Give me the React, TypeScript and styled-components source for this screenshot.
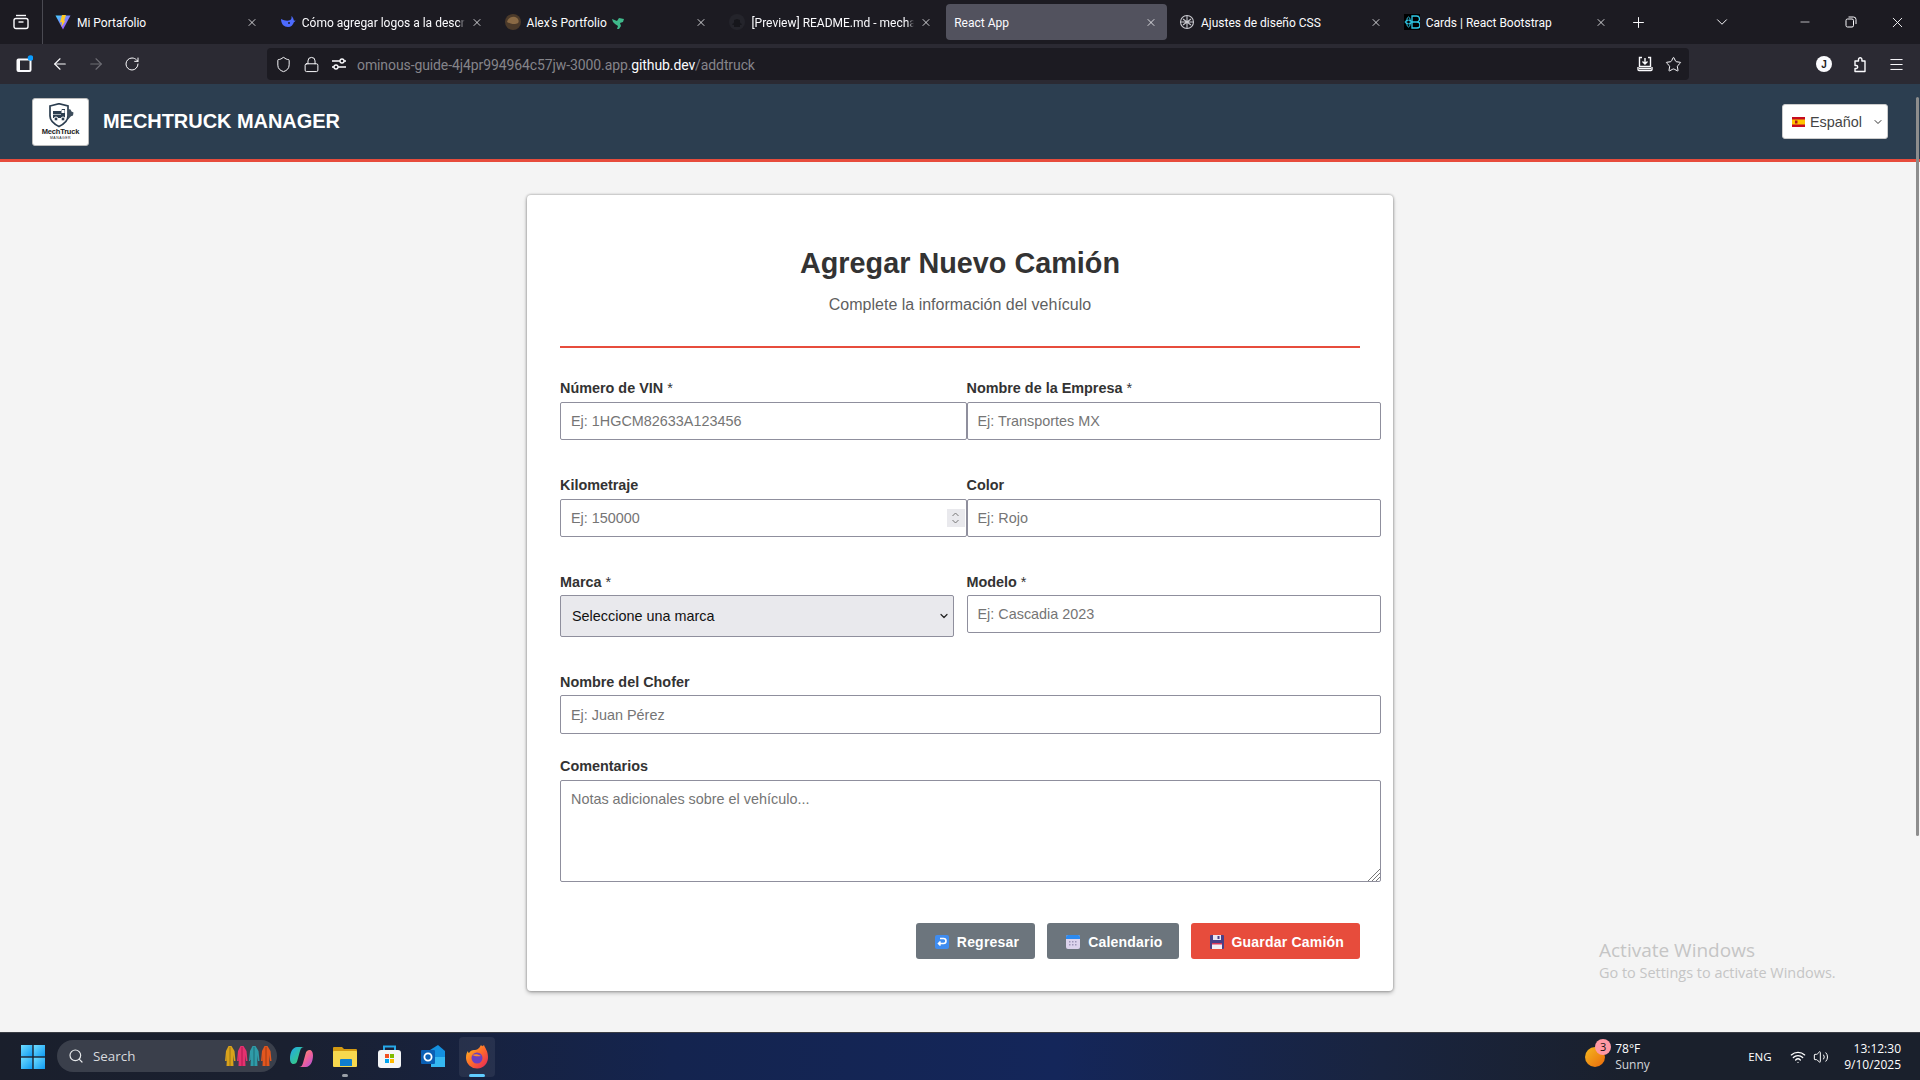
import React from "react";
import styled, { createGlobalStyle } from "styled-components";
import { ArrowLeft, ArrowRight, ChevronDown, Lock, Menu, Minus, Plus, RotateCw, Search, Shield, Star, Volume2, Wifi, X } from "lucide-react";

const Global = createGlobalStyle`
  html, body { margin: 0; padding: 0; width: 1920px; height: 1080px; overflow: hidden; background: #f4f4f4; }
  * { box-sizing: border-box; }
`;

const Screen = styled.div`
  width: 1920px; height: 1080px; display: flex; flex-direction: column; overflow: hidden;
  font-family: "Liberation Sans", Arial, sans-serif;
`;

/* ---------- browser chrome ---------- */
const TabStrip = styled.div`
  height: 44px; flex: none; display: flex; align-items: center; background: #1c1b22; color: #fbfbfe;
  font-family: Roboto, "Noto Sans", sans-serif; font-size: 12px;
`;
const SideSlot = styled.div`
  width: 43px; height: 44px; flex: none; display: flex; align-items: center; justify-content: center;
  border-right: 1px solid #4a4a52; margin-right: 2px;
`;
const Tab = styled.div`
  flex: 0 0 224.8px; min-width: 0; height: 44px; padding: 4px 2px;
`;
const TabBody = styled.div<{ $active?: boolean }>`
  height: 36px; padding: 0 10px 0 8px; display: flex; align-items: center; gap: 6px; border-radius: 4px; min-width: 0;
  background: ${(p) => (p.$active ? "#52525e" : "transparent")};
`;
const Fav = styled.span`
  width: 16px; height: 16px; flex: none; display: flex;
`;
const TabTitle = styled.span<{ $fade?: boolean }>`
  flex: 1; min-width: 0; white-space: nowrap; display: flex; align-items: center; gap: 4px; padding-top: 1px;
  ${(p) => (p.$fade ? "-webkit-mask-image: linear-gradient(to left, transparent 0, #000 7px); mask-image: linear-gradient(to left, transparent 0, #000 7px);" : "")}
`;
const TabClose = styled.span`
  width: 12px; height: 16px; flex: none; display: flex; align-items: center; justify-content: center;
`;
const StripBtn = styled.div<{ $w?: number; $ml?: string; $mr?: number }>`
  width: ${(p) => p.$w ?? 36}px; height: 44px; flex: none; display: flex; align-items: center; justify-content: center;
  margin-left: ${(p) => p.$ml ?? "0"}; margin-right: ${(p) => p.$mr ?? 0}px;
`;

const Toolbar = styled.div`
  height: 40px; flex: none; display: flex; align-items: center; padding: 0 6px; background: #2b2a33; color: #fbfbfe;
`;
const ToolBtn = styled.div<{ $dim?: boolean }>`
  width: 36px; height: 32px; flex: none; display: flex; align-items: center; justify-content: center;
  color: ${(p) => (p.$dim ? "#6f6e75" : "#fbfbfe")};
`;
const UrlBar = styled.div`
  width: 1422px; height: 32px; margin-left: 117px; padding: 0 2px; flex: none; display: flex; align-items: center;
  background: #1c1b22; border-radius: 4px;
`;
const UrlIcon = styled.div`
  width: 28px; height: 32px; flex: none; display: flex; align-items: center; justify-content: center;
`;
const UrlText = styled.div`
  flex: 1; margin-left: 4px; padding-top: 1px; font-family: Roboto, "Noto Sans", sans-serif; font-size: 14px; letter-spacing: -0.1px;
  color: #85848a; white-space: nowrap;
  b { font-weight: 400; color: #fbfbfe; }
`;
const ToolRight = styled.div`
  margin-left: auto; display: flex;
`;
const Avatar = styled.div`
  width: 16px; height: 16px; border-radius: 50%; background: #fbfbfe; color: #1c1b22; font-size: 10px; font-weight: 700;
  display: flex; align-items: center; justify-content: center;
`;

/* ---------- app ---------- */
const Page = styled.div`
  position: relative; flex: 1; min-height: 0; display: flex; flex-direction: column; background: #f4f4f4;
`;
const NavBar = styled.header`
  height: 78px; flex: none; display: flex; align-items: center; padding: 0 32px; background: #2c3e50; border-bottom: 3px solid #e74c3c;
`;
const LogoBox = styled.div`
  width: 57px; height: 48px; flex: none; background: #fff; border: 1px solid #bbb; border-radius: 3px;
  display: flex; flex-direction: column; align-items: center; padding-top: 4px; color: #222;
`;
const LogoName = styled.span`
  font-size: 7.5px; font-weight: 700; line-height: 8px; letter-spacing: -0.2px; white-space: nowrap;
`;
const LogoSub = styled.span`
  font-size: 3.5px; line-height: 4px; letter-spacing: 0.5px;
`;
const Brand = styled.h1`
  margin: 0 0 2px 14px; font-size: 20px; line-height: 24px; font-weight: 700; color: #fff; letter-spacing: -0.05px;
`;
const LangSelect = styled.div`
  margin-left: auto; width: 106px; height: 35px; padding: 0 3px 0 9px; display: flex; align-items: center; gap: 5px;
  background: #fff; border: 1px solid #ccc; border-radius: 3px; font-size: 14.4px; color: #444;
`;
const LangLabel = styled.span`
  flex: 1;
`;
const Main = styled.main`
  flex: 1; min-height: 0; padding-top: 33px; display: flex; justify-content: center;
`;
const Card = styled.section`
  width: 866px; height: fit-content; padding: 52px 33px 32px; background: #fff; border-radius: 4px;
  box-shadow: 0 0 2px 1px rgba(0, 0, 0, 0.18), 0 2px 4px rgba(0, 0, 0, 0.25);
`;
const Title = styled.h2`
  margin: 0 0 16px; text-align: center; font-size: 28.8px; line-height: 33px; font-weight: 700; color: #333;
`;
const Subtitle = styled.p`
  margin: 0; text-align: center; font-size: 16px; line-height: 18px; color: #5f5f5f;
`;
const Divider = styled.hr`
  margin: 32px 0 32px; width: 800px; height: 2px; border: 0; background: #e74c3c;
`;
const Row = styled.div<{ $mb: number; $cols?: string }>`
  display: grid; grid-template-columns: ${(p) => p.$cols ?? "406.5px 414.5px"}; margin-bottom: ${(p) => p.$mb}px; width: 821px;
`;
const Field = styled.div`
  position: relative; display: flex; flex-direction: column; min-width: 0;
`;
const Label = styled.label<{ $mb?: number }>`
  height: 16px; line-height: 16px; margin-bottom: ${(p) => p.$mb ?? 6}px; font-size: 14.4px; font-weight: 700; color: #333; white-space: nowrap;
  span { font-weight: 400; }
`;
const Input = styled.input<{ $h?: number }>`
  width: 100%; height: ${(p) => p.$h ?? 38}px; padding: 0 10px; border: 1px solid #8f8f9d; border-radius: 2px; background: #fff;
  font-family: inherit; font-size: 14.4px; color: #222; outline: none;
  &::placeholder { color: #757575; opacity: 1; }
`;
const Spinner = styled.span`
  position: absolute; right: 2px; bottom: 10px; width: 18px; height: 18px; background: #e9e9ed; color: #777;
  display: flex; flex-direction: column; align-items: center; justify-content: center;
`;
const SelectBox = styled.select`
  appearance: none; width: 394px; height: 42px; padding: 0 11px; border: 1px solid #8f8f9d; border-radius: 2px; background: #e9e9ed;
  font-family: inherit; font-size: 14.4px; color: #111; outline: none;
`;
const SelectArrow = styled.span`
  position: absolute; left: 378px; top: 36px; color: #222; display: flex; pointer-events: none;
`;
const TextArea = styled.textarea`
  display: block; width: 100%; height: 102px; padding: 10px; border: 1px solid #8f8f9d; border-radius: 2px; resize: none;
  font-family: inherit; font-size: 14.4px; outline: none;
  &::placeholder { color: #757575; opacity: 1; }
`;
const Grip = styled.svg`
  position: absolute; right: 1px; bottom: 1px;
`;
const Actions = styled.div`
  margin-top: 41px; display: flex; justify-content: flex-end; gap: 12px;
`;
const Button = styled.button<{ $primary?: boolean }>`
  height: 36px; padding: 1px 16px 0 19px; border: 0; border-radius: 3px; display: flex; align-items: center; gap: 8px;
  background: ${(p) => (p.$primary ? "#e74c3c" : "#6c757d")}; color: #fff;
  font-family: inherit; font-size: 14px; font-weight: 700; letter-spacing: 0.2px;
`;
const Scroll = styled.div`
  position: absolute; top: 13px; right: 1px; width: 3px; height: 739px; border-radius: 2px; background: #8d8d8d;
`;
const Watermark = styled.div`
  position: absolute; left: 1599px; top: 854px; color: #c5c5c5; font-family: "Open Sans", "Noto Sans", sans-serif;
  div:first-child { font-size: 19px; line-height: 24px; }
  div:last-child { font-size: 14.45px; line-height: 22px; }
`;

/* ---------- taskbar ---------- */
const Taskbar = styled.footer`
  height: 48px; flex: none; display: flex; align-items: center; padding: 0 19px 0 12px; color: #fff;
  background: linear-gradient(90deg, #1a1f2c 0%, #1a2030 15%, #14244f 35%, #14265a 55%, #19243f 72%, #1a202c 85%);
  border-top: 1px solid #3a3d45; font-family: "Open Sans", "Noto Sans", sans-serif; font-size: 12px;
`;
const TaskBtn = styled.div<{ $w?: number; $active?: boolean }>`
  position: relative; width: ${(p) => p.$w ?? 44}px; height: 40px; flex: none; display: flex; align-items: center; justify-content: center;
  &::before {
    content: ""; position: absolute; inset: 0 4px; border-radius: 4px;
    background: ${(p) => (p.$active ? "rgba(255,255,255,.07)" : "transparent")};
  }
  svg { position: relative; }
`;
const Indicator = styled.span<{ $on?: boolean }>`
  position: absolute; bottom: 0; left: 50%; transform: translateX(-50%); height: 3px; border-radius: 2px;
  width: ${(p) => (p.$on ? 16 : 6)}px; background: ${(p) => (p.$on ? "#60cdff" : "#9aa0a8")};
`;
const SearchPill = styled.div`
  width: 220px; height: 32px; margin: -1px 2px 0 4px; padding: 0 5px 0 11px; display: flex; align-items: center; gap: 9px; flex: none;
  border-radius: 16px; background: #3a3f4b; color: #d8dade; font-size: 13.4px;
`;
const Coats = styled.svg`
  margin-left: auto;
`;
const TrayRight = styled.div`
  margin-left: auto; display: flex; align-items: center;
`;
const Weather = styled.div`
  position: relative; display: flex; align-items: center; gap: 10px; width: 163px;
`;
const Sun = styled.span`
  width: 20px; height: 20px; border-radius: 50%; background: linear-gradient(135deg, #f4b81f, #ea6a0c); flex: none;
`;
const Badge = styled.span`
  position: absolute; left: 10px; top: -2px; width: 16px; height: 16px; border-radius: 50%; background: #ff99a4; color: #111;
  font-size: 11px; display: flex; align-items: center; justify-content: center;
`;
const TwoLine = styled.div<{ $right?: boolean }>`
  display: flex; flex-direction: column; line-height: 16px; text-align: ${(p) => (p.$right ? "right" : "left")};
  margin-left: ${(p) => (p.$right ? "12px" : "0")};
  small { font-size: 12px; color: #d4d6da; }
`;
const Eng = styled.span`
  width: 38px; font-size: 11.5px; font-weight: 500;
`;
const TrayIcon = styled.span`
  width: 23px; display: flex; justify-content: center;
`;

/* ---------- drawings ---------- */
const Vite = () => (
  <svg width="16" height="16" viewBox="0 0 16 16">
    <defs><linearGradient id="vt" x1="0" y1="0" x2="1" y2="1"><stop offset="0" stopColor="#41d1ff" /><stop offset="1" stopColor="#bd34fe" /></linearGradient></defs>
    <path d="M0.5 1.5 L15.5 1.5 L8 15.5 Z" fill="url(#vt)" />
    <path d="M7 1 L11 1 L9 7 L10.5 6.5 L6.5 13 L7 8 L5 8.5 Z" fill="#ffca28" />
  </svg>
);
const Whale = () => (
  <svg width="16" height="16" viewBox="0 0 16 16"><path d="M1 5c0 5 3 8 7 8 3 0 5-2 6-5 .5 0 1-.5 1.500-1.500-.7.2-1.200.2-1.700 0-.3-2-1-3.500-2.500-4.500.5 1.500.3 3-1 4C8 7 5 7 1 5z" fill="#4d6bfe" /><circle cx="9" cy="9" r="1" fill="#1c1b22" /></svg>
);
const Portrait = () => (
  <svg width="16" height="16" viewBox="0 0 16 16"><circle cx="8" cy="8" r="8" fill="#4b3a2a" /><path d="M2 8c1-4 6-7 10-4 2 2 2 4 1 5-3 2-8 1-11-1z" fill="#8a6a45" /></svg>
);
const Dino = () => (
  <svg width="14" height="14" viewBox="0 0 14 14"><path d="M1 3l5 2 2-3 5 1-1 3-3 1 1 3-2 3H6l1-3-3-2-2-2z" fill="#3fb98b" /></svg>
);
const GitHubMark = () => (
  <svg width="16" height="16" viewBox="0 0 16 16"><circle cx="8" cy="8" r="8" fill="#24242b" /><path d="M5 13v-2c-2 0-2-1-2-1 1 0 2-1 2-2V6l3-1 3 1v2c0 1 1 2 2 2 0 0 0 1-2 1v2z" fill="#16161b" /></svg>
);
const Knot = () => (
  <svg width="16" height="16" viewBox="0 0 16 16" fill="none" stroke="#c9c9cf" strokeWidth="1.100"><circle cx="8" cy="8" r="6.500" /><path d="M4 5l8 6M12 5l-8 6M8 1.500v13M2 8h12" /></svg>
);
const RBLogo = () => (
  <svg width="16" height="16" viewBox="0 0 16 16"><rect width="16" height="16" fill="#000" /><g fill="none" stroke="#2fc9e8" strokeWidth="1"><ellipse cx="4.500" cy="8" rx="3.500" ry="1.800" /><ellipse cx="4.500" cy="8" rx="1.800" ry="5" /><path d="M8 2h4.500a2.800 2.800 0 0 1 0 6H8zM8 8h5a3 3 0 0 1 0 6H8z" strokeWidth="1.300" /></g></svg>
);
const TabsIcon = () => (
  <svg width="16" height="16" viewBox="0 0 16 16" fill="none" stroke="#fbfbfe" strokeWidth="1.400"><path d="M3 1.500h10" /><rect x="1" y="4.500" width="14" height="10" rx="2" /><path d="M5.500 8h5" /></svg>
);
const SidebarIcon = () => (
  <svg width="18" height="18" viewBox="0 0 18 18"><rect x="2.500" y="4.500" width="13" height="11.500" rx="1" fill="none" stroke="#fbfbfe" strokeWidth="2" /><rect x="2" y="4" width="3" height="12" fill="#fbfbfe" /><circle cx="15.500" cy="3" r="2.800" fill="#0a9dff" /></svg>
);
const Sliders = () => (
  <svg width="16" height="16" viewBox="0 0 16 16" fill="none" stroke="#fbfbfe" strokeWidth="1.300"><path d="M1 5h8M13 5h2M7 11h8M1 11h2" /><circle cx="11" cy="5" r="2" /><circle cx="5" cy="11" r="2" /></svg>
);
const SaveTab = () => (
  <svg width="16" height="16" viewBox="0 0 16 16" fill="none" stroke="#fbfbfe" strokeWidth="1.400"><path d="M5 1.500H2.500v9h11v-9H11M8 2v6M5.500 5.500 8 8l2.500-2.500" /><path d="M1 11v2.500a1 1 0 0 0 1 1h12a1 1 0 0 0 1-1V11" /><path d="M2 12.500h12" /></svg>
);
const Puzzle = () => (
  <svg width="16" height="17" viewBox="0 0 16 17" fill="none" stroke="#fbfbfe" strokeWidth="1.400" strokeLinejoin="round"><path d="M3 5h3.500V3.500a1.700 1.700 0 1 1 3.400 0V5H13v10.500H3v-3h1.200a1.500 1.500 0 0 0 0-3H3z" /></svg>
);
const Restore = () => (
  <svg width="12" height="12" viewBox="0 0 12 12" fill="none" stroke="#fbfbfe" strokeWidth="1"><rect x="1" y="3" width="7.500" height="8" rx="1.500" /><path d="M3.500 1h5a2.500 2.500 0 0 1 2.500 2.500V8" /></svg>
);
const TruckLogo = () => (
  <svg width="30" height="25" viewBox="0 0 30 25">
    <path d="M4 3 13 0.700 22 3v10c0 5-4 8-9 10.500C8 21 4 18 4 13z" fill="none" stroke="#2c3e50" strokeWidth="1.700" />
    <path d="M7 8h8l1-2h3v9H7z" fill="#2c3e50" />
    <rect x="15.500" y="7" width="3" height="3" fill="#fff" />
    <path d="M7 11.500h8" stroke="#fff" strokeWidth=".6" />
    <circle cx="10" cy="16" r="2" fill="#2c3e50" stroke="#fff" /><circle cx="17" cy="16" r="2" fill="#2c3e50" stroke="#fff" />
    <path d="M22 6l2.500.5 1 2 2 1-.5 3-2 .8-3 3.200z" fill="#3d4d5c" />
  </svg>
);
const Flag = () => (
  <svg width="13" height="10" viewBox="0 0 13 10"><rect width="13" height="10" fill="#c60b1e" /><rect y="2.500" width="13" height="5" fill="#ffc400" /><rect x="3" y="3.500" width="2.500" height="3" fill="#ad1519" /></svg>
);
const ReturnIcon = () => (
  <svg width="14" height="14" viewBox="0 0 14 14"><rect width="14" height="14" rx="2" fill="#3f8cf0" /><path d="M5 3.500h3.500a2.500 2.500 0 0 1 0 5H3.500M5.500 6.500l-2 2 2 2" fill="none" stroke="#fff" strokeWidth="1.600" /></svg>
);
const CalIcon = () => (
  <svg width="14" height="14" viewBox="0 0 14 14"><rect width="14" height="14" rx="2" fill="#dcd3ec" /><path d="M0 4V2a2 2 0 0 1 2-2h10a2 2 0 0 1 2 2v2z" fill="#2c8af0" /><g fill="#9d95b8"><rect x="3" y="6" width="1.500" height="1.500" /><rect x="6" y="6" width="1.500" height="1.500" /><rect x="9" y="6" width="1.500" height="1.500" /><rect x="3" y="9" width="1.500" height="1.500" /><rect x="6" y="9" width="1.500" height="1.500" /><rect x="9" y="9" width="1.500" height="1.500" /></g></svg>
);
const FloppyIcon = () => (
  <svg width="14" height="14" viewBox="0 0 14 14"><rect width="14" height="14" rx="1" fill="#4a3f86" /><rect x="3" y="0" width="8" height="5" fill="#e9e4f2" /><rect x="7.500" y="1" width="2" height="3" fill="#4a3f86" /><rect x="2" y="8" width="10" height="6" fill="#f2eef5" /><rect x="2" y="8" width="10" height="1.500" fill="#d9385c" /></svg>
);
const WinLogo = () => (
  <svg width="24" height="24" viewBox="0 0 24 24"><defs><linearGradient id="wg" x1="0" y1="0" x2="1" y2="1"><stop offset="0" stopColor="#6fdcff" /><stop offset="1" stopColor="#0f9bf2" /></linearGradient></defs><g fill="url(#wg)"><rect width="11.300" height="11.300" /><rect x="12.700" width="11.300" height="11.300" /><rect y="12.700" width="11.300" height="11.300" /><rect x="12.700" y="12.700" width="11.300" height="11.300" /></g></svg>
);
const CoatsArt = () => (
  <Coats width="47" height="22" viewBox="0 0 47 22">
    {[["#d9a21b", "#8c6a10", 0], ["#e5316f", "#a3124a", 12], ["#2f9ba8", "#175f6a", 24], ["#e2571f", "#98340c", 36]].map(([c, d, x]) => (
      <g key={String(x)} transform={`translate(${x})`}>
        <path d="M3.500 1h3l3 5 1 10-1.500 0L8 10l.5 11h-7L2 10l-.5 6L0 16l1-10z" fill={String(c)} />
        <path d="M5 2v19" stroke={String(d)} strokeWidth=".8" />
      </g>
    ))}
  </Coats>
);
const Copilot = () => (
  <svg width="23" height="22" viewBox="0 0 23 22">
    <defs>
      <linearGradient id="cpa" x1="0" y1="0" x2="1" y2="1"><stop offset="0" stopColor="#1fa6ee" /><stop offset=".7" stopColor="#36c98a" /><stop offset="1" stopColor="#c4d84a" /></linearGradient>
      <linearGradient id="cpb" x1="0" y1="0" x2="1" y2="1"><stop offset="0" stopColor="#f4a35a" /><stop offset=".55" stopColor="#f0609a" /><stop offset="1" stopColor="#a752e0" /></linearGradient>
    </defs>
    <path d="M7 1h7c-2 0-3 1-4 4l-2.500 9c-.7 3-2 4-4 4-2.500 0-3.500-2.500-3.500-5.500C0 6 3 1 7 1z" fill="url(#cpa)" />
    <path d="M16 21H9c2 0 3-1 4-4l2.500-9c.7-3 2-4 4-4 2.500 0 3.500 2.500 3.500 5.500C23 16 20 21 16 21z" fill="url(#cpb)" />
  </svg>
);
const Folder = () => (
  <svg width="24" height="21" viewBox="0 0 24 21"><path d="M0 2a1 1 0 0 1 1-1h8l2 2h12a1 1 0 0 1 1 1v2H0z" fill="#d39a12" /><rect y="5" width="24" height="16" rx="1" fill="#f7d84e" /><path d="M7 14a1 1 0 0 1 1-1h10a1 1 0 0 1 1 1v6H7z" fill="#0f7fd0" /></svg>
);
const StoreBag = () => (
  <svg width="23" height="23" viewBox="0 0 23 23"><path d="M6 6V1.500h11V6" fill="none" stroke="#26a8e8" strokeWidth="2" /><rect y="5" width="23" height="18" rx="3" fill="#f4f5f7" /><rect x="7" y="9" width="4" height="4" fill="#f25022" /><rect x="12" y="9" width="4" height="4" fill="#7fba00" /><rect x="7" y="14" width="4" height="4" fill="#00a4ef" /><rect x="12" y="14" width="4" height="4" fill="#ffb900" /></svg>
);
const Outlook = () => (
  <svg width="24" height="23" viewBox="0 0 24 23"><path d="M9 5 17 0l7 6v13H9z" fill="#1490df" /><path d="M10 12h14v10H10z" fill="#35b8f1" /><rect y="5" width="14" height="14" rx="1" fill="#0a5fb4" /><circle cx="7" cy="12" r="3.600" fill="none" stroke="#fff" strokeWidth="1.800" /></svg>
);
const Firefox = () => (
  <svg width="24" height="24" viewBox="0 0 24 24"><defs><linearGradient id="ff" x1="0" y1="0" x2="1" y2="1"><stop offset="0" stopColor="#ffc11f" /><stop offset=".5" stopColor="#ff6a2b" /><stop offset="1" stopColor="#e3215e" /></linearGradient></defs><path d="M19 0c1 3 4 6 4 12a11 11 0 0 1-22 1c0-4 1-6 2-7 0 1 .5 2 1 2 1-2 3-3 5-3 3 0 5-1 7-5 1 1 1 2 3 0z" fill="url(#ff)" /><circle cx="12" cy="13" r="5.500" fill="#6c3fc0" /><path d="M7 10c3-1 6-1 9 1-2 0-5 1-9-1z" fill="#ff8a2b" /></svg>
);

const tabs: { title: React.ReactNode; icon?: React.ReactNode; active?: boolean; fade?: boolean }[] = [
  { title: "Mi Portafolio", icon: <Vite /> },
  { title: "Cómo agregar logos a la descrip", icon: <Whale />, fade: true },
  { title: <>Alex's Portfolio <Dino /></>, icon: <Portrait /> },
  { title: "[Preview] README.md - mechar", icon: <GitHubMark />, fade: true },
  { title: "React App", active: true },
  { title: "Ajustes de diseño CSS", icon: <Knot /> },
  { title: "Cards | React Bootstrap", icon: <RBLogo /> },
];

export default function App() {
  return (
    <Screen>
      <Global />
      <TabStrip>
        <SideSlot><TabsIcon /></SideSlot>
        {tabs.map((t, i) => (
          <Tab key={i}>
            <TabBody $active={t.active}>
              {t.icon && <Fav>{t.icon}</Fav>}
              <TabTitle $fade={t.fade}>{t.title}</TabTitle>
              <TabClose><X size={13} strokeWidth={1.6} /></TabClose>
            </TabBody>
          </Tab>
        ))}
        <StripBtn $ml="2px"><Plus size={17} strokeWidth={1.4} /></StripBtn>
        <StripBtn $ml="auto" $mr={42}><ChevronDown size={18} strokeWidth={1.3} /></StripBtn>
        <StripBtn $w={46}><Minus size={14} strokeWidth={1.2} /></StripBtn>
        <StripBtn $w={46}><Restore /></StripBtn>
        <StripBtn $w={46}><X size={17} strokeWidth={1.3} /></StripBtn>
      </TabStrip>

      <Toolbar>
        <ToolBtn><SidebarIcon /></ToolBtn>
        <ToolBtn><ArrowLeft size={18} strokeWidth={1.5} /></ToolBtn>
        <ToolBtn $dim><ArrowRight size={18} strokeWidth={1.5} /></ToolBtn>
        <ToolBtn><RotateCw size={16} strokeWidth={1.5} /></ToolBtn>
        <UrlBar>
          <UrlIcon><Shield size={17} strokeWidth={1.4} color="#fbfbfe" /></UrlIcon>
          <UrlIcon><Lock size={17} strokeWidth={1.4} color="#fbfbfe" /></UrlIcon>
          <UrlIcon><Sliders /></UrlIcon>
          <UrlText>ominous-guide-4j4pr994964c57jw-3000.app.<b>github.dev</b>/addtruck</UrlText>
          <UrlIcon><SaveTab /></UrlIcon>
          <UrlIcon><Star size={17} strokeWidth={1.4} color="#fbfbfe" /></UrlIcon>
        </UrlBar>
        <ToolRight>
          <ToolBtn><Avatar>J</Avatar></ToolBtn>
          <ToolBtn><Puzzle /></ToolBtn>
          <ToolBtn><Menu size={17} strokeWidth={1.4} /></ToolBtn>
        </ToolRight>
      </Toolbar>

      <Page>
        <NavBar>
          <LogoBox>
            <TruckLogo />
            <LogoName>MechTruck</LogoName>
            <LogoSub>MANAGER</LogoSub>
          </LogoBox>
          <Brand>MECHTRUCK MANAGER</Brand>
          <LangSelect>
            <Flag />
            <LangLabel>Español</LangLabel>
            <ChevronDown size={12} strokeWidth={2} color="#333" />
          </LangSelect>
        </NavBar>

        <Main>
          <Card>
            <Title>Agregar Nuevo Camión</Title>
            <Subtitle>Complete la información del vehículo</Subtitle>
            <Divider />
            <Row $mb={37}>
              <Field><Label>Número de VIN <span>*</span></Label><Input placeholder="Ej: 1HGCM82633A123456" /></Field>
              <Field><Label>Nombre de la Empresa <span>*</span></Label><Input placeholder="Ej: Transportes MX" /></Field>
            </Row>
            <Row $mb={37}>
              <Field>
                <Label>Kilometraje</Label>
                <Input placeholder="Ej: 150000" />
                <Spinner>
                  <svg width="9" height="14" viewBox="0 0 9 14" fill="none" stroke="#777" strokeWidth="1"><path d="M1.500 5 4.500 2l3 3M1.500 9l3 3 3-3" /></svg>
                </Spinner>
              </Field>
              <Field><Label>Color</Label><Input placeholder="Ej: Rojo" /></Field>
            </Row>
            <Row $mb={37}>
              <Field>
                <Label $mb={5}>Marca <span>*</span></Label>
                <SelectBox defaultValue=""><option value="">Seleccione una marca</option></SelectBox>
                <SelectArrow><ChevronDown size={12} strokeWidth={2.4} /></SelectArrow>
              </Field>
              <Field><Label $mb={5}>Modelo <span>*</span></Label><Input placeholder="Ej: Cascadia 2023" /></Field>
            </Row>
            <Row $mb={24} $cols="821px">
              <Field><Label $mb={5}>Nombre del Chofer</Label><Input $h={39} placeholder="Ej: Juan Pérez" /></Field>
            </Row>
            <Row $mb={0} $cols="821px">
              <Field>
                <Label>Comentarios</Label>
                <TextArea placeholder="Notas adicionales sobre el vehículo..." />
                <Grip width="14" height="14" viewBox="0 0 14 14" stroke="#777" strokeWidth="1">
                  <path d="M2 14 14 2M6 14l8-8M10 14l4-4" />
                </Grip>
              </Field>
            </Row>
            <Actions>
              <Button><ReturnIcon />Regresar</Button>
              <Button><CalIcon />Calendario</Button>
              <Button $primary><FloppyIcon />Guardar Camión</Button>
            </Actions>
          </Card>
        </Main>
        <Scroll />
        <Watermark>
          <div>Activate Windows</div>
          <div>Go to Settings to activate Windows.</div>
        </Watermark>
      </Page>

      <Taskbar>
        <TaskBtn $w={41}><WinLogo /></TaskBtn>
        <SearchPill>
          <Search size={16} strokeWidth={1.8} color="#e6e8ea" />
          Search
          <CoatsArt />
        </SearchPill>
        <TaskBtn><Copilot /></TaskBtn>
        <TaskBtn><Folder /><Indicator /></TaskBtn>
        <TaskBtn><StoreBag /></TaskBtn>
        <TaskBtn><Outlook /></TaskBtn>
        <TaskBtn $active><Firefox /><Indicator $on /></TaskBtn>
        <TrayRight>
          <Weather>
            <Sun />
            <Badge>3</Badge>
            <TwoLine><span>78°F</span><small>Sunny</small></TwoLine>
          </Weather>
          <Eng>ENG</Eng>
          <TrayIcon><Wifi size={16} /></TrayIcon>
          <TrayIcon><Volume2 size={16} strokeWidth={1.5} /></TrayIcon>
          <TwoLine $right><span>13:12:30</span><span>9/10/2025</span></TwoLine>
        </TrayRight>
      </Taskbar>
    </Screen>
  );
}
